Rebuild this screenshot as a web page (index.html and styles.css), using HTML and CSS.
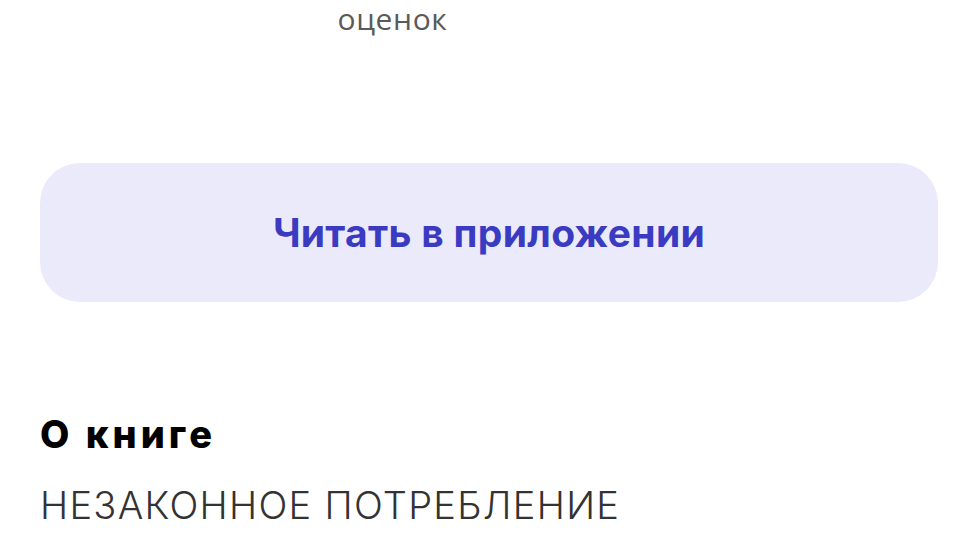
FILE: index.html
```html
<!DOCTYPE html>
<html lang="ru">
<head>
<meta charset="utf-8">
<link rel="stylesheet" href="styles.css">
</head>
<body>
<div class="page">
  <div class="stats">
    <div class="stat"></div>
    <div class="stat"><span class="stat-label">оценок</span></div>
    <div class="stat"></div>
    <div class="stat"></div>
  </div>
  <button class="read-btn">Читать в приложении</button>
  <section class="about">
    <h2 class="about-title">О книге</h2>
    <p class="about-text">НЕЗАКОННОЕ ПОТРЕБЛЕНИЕ</p>
  </section>
</div>
</body>
</html>
```

FILE: styles.css
```css
html, body {
  margin: 0;
  padding: 0;
  background: #ffffff;
}
.page {
  padding: 0 41px 0 40px;
  font-family: Inter, "Noto Sans", sans-serif;
}
.stats {
  display: grid;
  grid-template-columns: 250px 205px 225px 1fr;
  height: 40px;
}
.stat {
  display: flex;
  justify-content: center;
}
.stat-label {
  font-family: "Open Sans", sans-serif;
  font-size: 30px;
  letter-spacing: 0.6px;
  line-height: 38px;
  color: #5a5a5a;
}
.read-btn {
  display: block;
  width: 100%;
  height: 139px;
  margin-top: 123px;
  border: none;
  border-radius: 40px;
  background: #ebeafa;
  color: #3b3bc2;
  font-family: Inter, sans-serif;
  font-weight: 700;
  font-size: 39px;
  letter-spacing: 0.3px;
  cursor: pointer;
}
.about {
  margin-top: 110px;
}
.about-title {
  margin: 0;
  font-size: 38px;
  font-weight: 800;
  letter-spacing: 4px;
  line-height: 44px;
  color: #000;
}
.about-text {
  margin: 26px 0 0;
  font-size: 38px;
  font-weight: 300;
  letter-spacing: 1.3px;
  line-height: 46px;
  color: #333;
}
```
